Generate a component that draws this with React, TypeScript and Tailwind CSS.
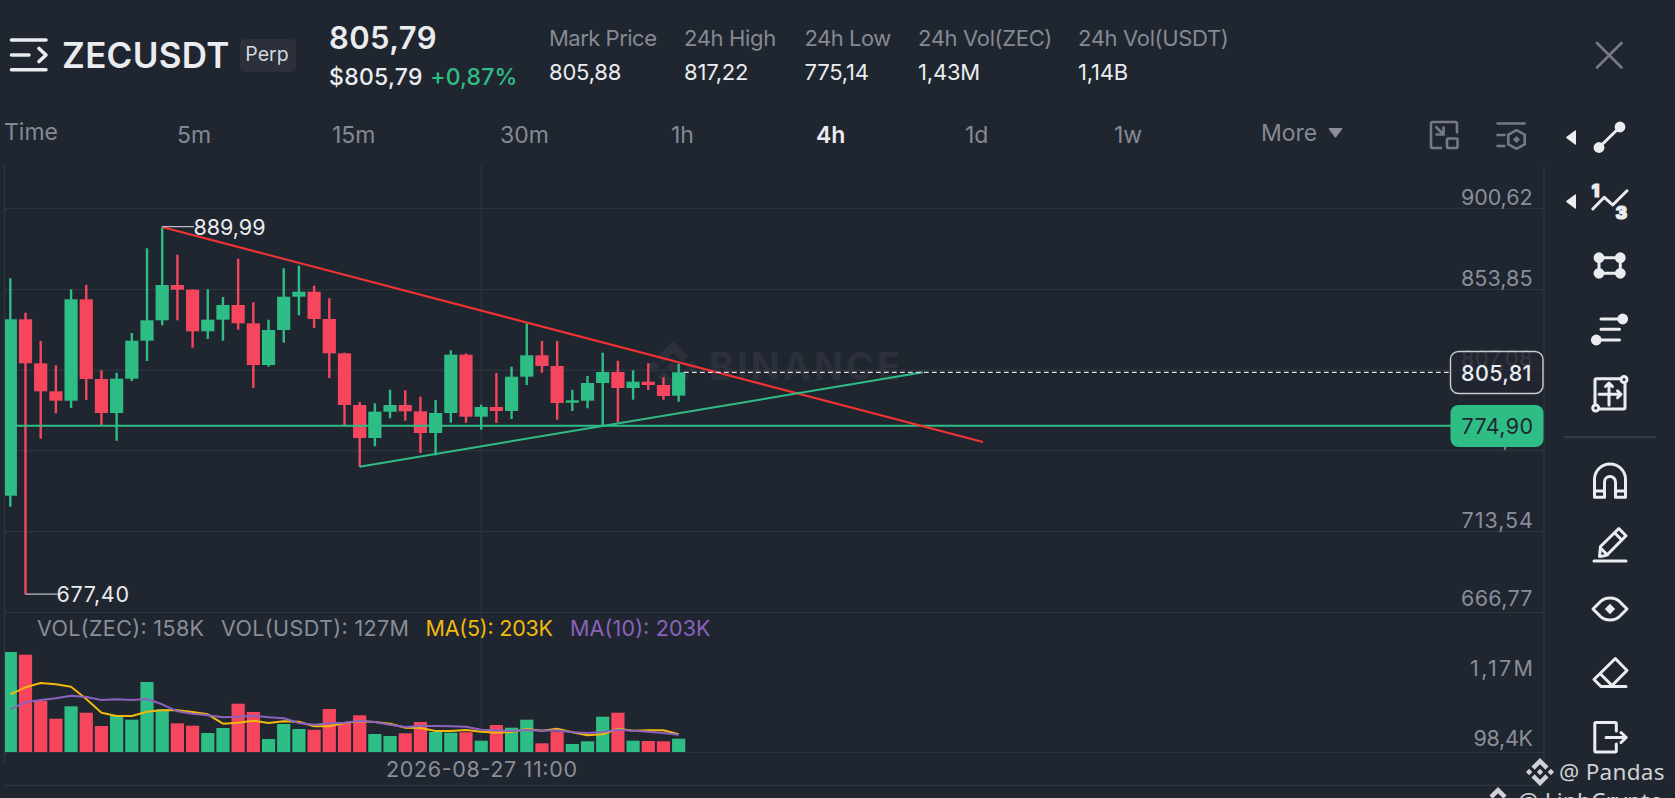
import type { ReactNode } from 'react'

const GREEN = '#2ebd85'
const RED = '#f6465d'
const GRID = '#2f343f'
const MUTED = '#8a8e99'
const LIGHT = '#eaecef'

const stats = [
  { label: 'Mark Price', value: '805,88', width: 'w-[135px]', tracking: 'tracking-[-0.5px]' },
  { label: '24h High', value: '817,22', width: 'w-[120.5px]', tracking: 'tracking-[-0.35px]' },
  { label: '24h Low', value: '775,14', width: 'w-[113.5px]', tracking: 'tracking-[-0.5px]' },
  { label: '24h Vol(ZEC)', value: '1,43M', width: 'w-[160px]', tracking: 'tracking-[-0.35px]' },
  { label: '24h Vol(USDT)', value: '1,14B', width: 'w-[160px]', tracking: 'tracking-[-0.35px]' },
]

const intervals = [
  { label: 'Time', width: 'w-[173px]', raised: true },
  { label: '5m', width: 'w-[155px]' },
  { label: '15m', width: 'w-[168px]' },
  { label: '30m', width: 'w-[171px]' },
  { label: '1h', width: 'w-[145px]' },
  { label: '4h', width: 'w-[149px]', active: true },
  { label: '1d', width: 'w-[149px]' },
  { label: '1w', width: 'w-[147px]' },
]

type Candle = [up: 0 | 1, high: number, top: number, bottom: number, low: number, vol: number]

// y positions of each candle, last column is the top of its volume bar
const candles: Candle[] = [
  [1, 278.3, 319.3, 495.7, 506.7, 652],
  [0, 312.7, 319.3, 363.3, 594.3, 654.7],
  [0, 341, 363.3, 391.3, 438.7, 700.7],
  [0, 365.3, 391.3, 400.7, 413.3, 718.7],
  [1, 289.3, 299.3, 400.7, 408, 706.3],
  [0, 285, 299.3, 379, 400, 712.7],
  [0, 370.3, 379, 413, 425.3, 726],
  [1, 372.7, 378.7, 413, 440.7, 716],
  [1, 333, 340.7, 378.7, 381, 719.7],
  [1, 248.3, 320.3, 340.7, 361, 682],
  [1, 227.3, 285, 320.3, 325.3, 709.3],
  [0, 254.7, 285, 289.7, 320.3, 723.3],
  [0, 289.3, 289.7, 331.3, 347.7, 725.7],
  [1, 289.3, 319.7, 331.3, 339, 733],
  [1, 297, 305, 319.7, 340.7, 728],
  [0, 258.7, 305, 323.3, 329.7, 703.7],
  [0, 302.3, 323.3, 365, 388, 712],
  [1, 319.7, 330, 365, 366.7, 739],
  [1, 268.3, 296.7, 330, 342.7, 724],
  [1, 265.7, 291.7, 296.7, 315.3, 729],
  [0, 285.7, 291.7, 319, 328, 729.7],
  [0, 298.3, 319, 353.3, 378, 709],
  [0, 352.7, 353.3, 405, 425, 723],
  [0, 402, 405, 438, 466.7, 715.3],
  [1, 403.3, 411.7, 438, 446.3, 734],
  [1, 389.7, 405, 411.7, 418.3, 736],
  [0, 390.3, 405, 411.3, 420.7, 733.3],
  [0, 396.7, 411.3, 433, 453, 722],
  [1, 400, 413, 433, 455.3, 732],
  [1, 350.3, 354.7, 413, 422.7, 732.7],
  [0, 353.3, 354.7, 416.7, 422.7, 732.3],
  [1, 404.7, 407, 416.7, 429.7, 740.7],
  [0, 373, 407, 411, 423, 725],
  [1, 366.7, 376.7, 411, 419, 727.7],
  [1, 323.3, 355.3, 376.7, 385, 719.7],
  [0, 341, 355.3, 366, 372.7, 743.3],
  [0, 341, 366, 403, 419.7, 731.7],
  [1, 389.7, 400.3, 402.7, 411, 744],
  [1, 376, 383, 400.7, 408.3, 741.3],
  [1, 352.7, 372, 383, 425.7, 716.7],
  [0, 360.7, 372, 388, 422, 712.7],
  [1, 370.3, 381.7, 388, 399.7, 740.7],
  [0, 363.3, 381.7, 385, 390, 741],
  [0, 377.3, 385, 396, 399.7, 741.3],
  [1, 363.7, 372.3, 395.7, 401.7, 738.7],
]

const ma5 = [
  694.3, 687.3, 683, 684.3, 686.7, 699, 712.7, 716, 716, 711.7, 710.3, 710.3, 712, 714.3, 723.7,
  722.7, 720.7, 723, 721.3, 721.7, 726.3, 726.3, 723, 721.3, 722, 723.7, 727.7, 728, 731, 731, 730,
  731.7, 732.7, 732, 729, 730.7, 728.7, 732.3, 735.3, 734.3, 728.7, 730.7, 730.3, 730.3, 734.3,
]

const ma10 = [
  709.3, 702.3, 700, 698.3, 695.7, 697, 700, 699.3, 700, 699, 704.3, 711.3, 713.7, 715.3, 717.3,
  716.7, 715.7, 717.3, 718.3, 723, 724.7, 723.3, 722.7, 721, 722, 724.7, 727, 726, 726, 726.3,
  726.7, 729.7, 730.3, 731, 730, 730.7, 730.3, 732.3, 733, 732, 729.7, 730.7, 731.7, 733, 734.7,
]

const axis = [
  { text: '900,62', y: 204.5, x: 1461, w: 71.5 },
  { text: '853,85', y: 285.5, x: 1461, w: 71.5 },
  { text: '760,31', y: 446, x: 1461, w: 71.5 },
  { text: '713,54', y: 527.5, x: 1461.5, w: 71.5 },
  { text: '666,77', y: 605.7, x: 1461, w: 71.5 },
  { text: '1,17M', y: 675.5, x: 1470, w: 63 },
  { text: '98,4K', y: 746.3, x: 1473.5, w: 59.5 },
]

const cx = (i: number) => 10.3 + i * 15.19

const linePoints = (values: number[]) => values.map((y, i) => `${cx(i)},${y}`).join(' ')

function BinanceMark({ className }: { className?: string }) {
  return (
    <svg viewBox="0 0 24 24" fill="currentColor" className={className}>
      <path d="M12 0 4.7 7.3l2.7 2.7L12 5.4l4.6 4.6 2.7-2.7zM2.7 9.3 0 12l2.7 2.7L5.4 12zM12 9.3 9.3 12l2.7 2.7 2.7-2.7zM21.3 9.3 18.6 12l2.7 2.7L24 12zM7.4 14l-2.7 2.7L12 24l7.3-7.3-2.7-2.7-4.6 4.6z" />
    </svg>
  )
}

function Header() {
  return (
    <header className="flex h-[110px] items-center">
      <svg viewBox="0 0 40 36" className="ml-[9px] h-9 w-10 shrink-0" fill="none" stroke={LIGHT} strokeWidth="3.6" strokeLinecap="round">
        <path d="M2.5 3H37M2.5 18H20M2.5 32.7H37" />
        <path d="m30 11.5 7 6.5-7 6.5" strokeLinejoin="round" />
      </svg>
      <h1 className="ml-[13px] w-[178px] text-[35px] font-semibold tracking-[0.3px] whitespace-nowrap">ZECUSDT</h1>
      <span className="flex h-[33px] w-14 items-center justify-center rounded-[5px] bg-[#2b303b] text-[19.5px] text-[#d5d7dc]">
        <span className="-ml-0.5">Perp</span>
      </span>
      <div className="ml-[33px] w-[220px] self-start pt-5 whitespace-nowrap">
        <p className="text-[31px] leading-9 font-semibold tracking-[0.4px]">805,79</p>
        <p className="mt-[6px] text-[23px] leading-[30px] font-medium tracking-[0.3px]">
          $805,79 <span className="ml-px tracking-[0.1px] text-[#2ebd85]">+0,87%</span>
        </p>
      </div>
      <div className="flex self-start pt-[22px] text-[22px] leading-8 whitespace-nowrap">
        {stats.map((s) => (
          <div key={s.label} className={s.width}>
            <p className={`text-[#858994] ${s.tracking}`}>{s.label}</p>
            <p className="mt-[1.5px] tracking-[-0.2px]">{s.value}</p>
          </div>
        ))}
      </div>
    </header>
  )
}

function Intervals() {
  return (
    <nav className="flex h-[50px] items-center pl-1 text-[23px] text-[#858994]">
      {intervals.map((item) => (
        <button
          key={item.label}
          className={`text-left ${item.width} ${item.raised ? 'pb-[5px]' : ''} ${item.active ? 'font-semibold text-[#eaecef]' : ''}`}
        >
          {item.label}
        </button>
      ))}
      <button className="flex w-[168px] items-center gap-[11px] pb-[4px]">
        More
        <svg viewBox="0 0 15 10" className="h-2.5 w-[15px]" fill={MUTED}>
          <path d="M1.5 0h12q1.5 0 .6 1.2L8.3 9q-.8 1-1.6 0L.9 1.2Q0 0 1.5 0z" />
        </svg>
      </button>
      <svg viewBox="0 0 30 30" className="h-[30px] w-[30px]" fill="none" stroke="#767a85" strokeWidth="2.6">
        <path d="M28 13.5v-10Q28 2 26.5 2h-23Q2 2 2 3.5v23Q2 28 3.5 28H13" />
        <path d="m6.5 6.5 7.5 7.5M14.5 6.500v8h-8" />
        <rect x="18" y="18.5" width="10.5" height="9.5" rx="1" />
      </svg>
      <svg viewBox="0 0 30 30" className="ml-[37px] h-[30px] w-[30px]" fill="none" stroke="#767a85" strokeWidth="2.6">
        <path d="M.5 3.500h29M.5 15h9M.5 26h9" />
        <path d="m20.500 10.200 8.200 4.500v9.600l-8.200 4.500-8.200-4.500v-9.600z" />
        <path d="m20.500 16 3.500 3.500-3.500 3.500-3.500-3.500z" fill="#767a85" stroke="none" />
      </svg>
    </nav>
  )
}

function Chart() {
  return (
    <div className="h-[638px]">
      <svg viewBox="0 160 1548 638" width="1548" height="638" className="block font-['Inter',sans-serif] text-[21.5px]">
        <g fill="#2b303b">
          <path d="m673 341-15.500 15.500 6 6 9.500-9.500 9.500 9.500 6-6zM673 360.500l-6 6 6 6 6-6zM653.500 360.500l-6 6 6 6 6-6zM692.500 360.500l-6 6 6 6 6-6zM663.500 370.500l-6 6L673 392l15.500-15.500-6-6L673 380z" />
          <text x="709" y="380" fontSize="38" fontWeight="700" textLength="191">
            BINANCE
          </text>
        </g>

        <g stroke={GRID} strokeWidth="1.2">
          {[208.5, 289.5, 370.2, 450.7, 531.7, 612.5, 752.5, 785.3].map((y) => (
            <path key={y} d={`M5 ${y}H1544`} />
          ))}
          <path d="M4.5 165V765M481.3 165V752M1544 165V765" />
        </g>

        {candles.map(([up, high, top, bottom, low, vol], i) => {
          const color = up ? GREEN : RED
          // first bar is cut off by the left edge of the plot
          const left = i === 0 ? 5 : cx(i) - 6.6
          const width = cx(i) + 6.6 - left
          return (
            <g key={i} fill={color}>
              <rect x={cx(i) - 1.2} y={high} width="2.4" height={low - high} />
              <rect x={left} y={top} width={width} height={bottom - top} />
              <rect x={left} y={vol} width={width} height={752 - vol} />
            </g>
          )
        })}

        <g fill="none" strokeWidth="2" strokeLinejoin="round">
          <polyline points={linePoints(ma5)} stroke="#f0b90b" />
          <polyline points={linePoints(ma10)} stroke="#8b62bd" />
          <path d="M5 425.7H1451" stroke={GREEN} />
          <path d="M162 227 983 442" stroke="#f33232" />
          <path d="M359.5 466.7 923 372.3" stroke={GREEN} />
          <path d="M684 372.3H1450" stroke="#dfe1e5" strokeWidth="1.3" strokeDasharray="4.7 3.3" />
          <path d="M162 226.7h32M25.5 594.2h32" stroke="#b9bcc4" strokeWidth="1.3" />
        </g>

        <g fill={LIGHT}>
          <text x="193.5" y="235.300" textLength="72">889,99</text>
          <text x="56.5" y="602.200" textLength="72.500">677,40</text>
        </g>

        <g fill={MUTED}>
          <text x="37" y="635.5" textLength="167">VOL(ZEC): 158K</text>
          <text x="221" y="635.5" textLength="188">VOL(USDT): 127M</text>
          <text x="386" y="777" textLength="191">2026-08-27 11:00</text>
          {axis.map((a) => (
            <text key={a.text} x={a.x} y={a.y} textLength={a.w}>
              {a.text}
            </text>
          ))}
        </g>
        <text x="425.5" y="635.5" textLength="127.5" fill="#f0b90b">MA(5): 203K</text>
        <text x="570" y="635.5" textLength="140.5" fill="#8b62bd">MA(10): 203K</text>

        <text x="1461" y="365.5" textLength="71.5" fill="#414651">807,08</text>
        <rect x="1450.5" y="351.5" width="92.5" height="42" rx="8" fill="#202630" fillOpacity=".4" stroke="#c9ccd2" strokeWidth="1.4" />
        <text x="1461" y="381.2" textLength="70.5" fill={LIGHT} fontWeight="500">805,81</text>
        <rect x="1450.5" y="405" width="93" height="42" rx="8" fill={GREEN} />
        <text x="1461.5" y="434.2" textLength="71.5" fill="#202630">774,90</text>
      </svg>
    </div>
  )
}

function Tool({ children, arrow }: { children: ReactNode; arrow?: boolean }) {
  return (
    <button className="flex h-16 shrink-0 items-center gap-3.5 pl-[18px]">
      <svg viewBox="0 0 10 15" className="h-[15px] w-2.5" fill={LIGHT}>
        {arrow && <path d="M10 1v13q0 1.2-1 .4L.6 8.3q-.8-.8 0-1.6L9 .6q1-.8 1 .4z" />}
      </svg>
      <svg viewBox="0 0 40 40" className="h-10 w-10 overflow-visible" fill="none" stroke={LIGHT} strokeWidth="3" strokeLinecap="round" strokeLinejoin="round">
        {children}
      </svg>
    </button>
  )
}

function Dot({ x, y }: { x: number; y: number }) {
  return <circle cx={x} cy={y} r="5.4" fill={LIGHT} stroke="none" />
}

function Toolbar() {
  return (
    <aside className="flex w-[127px] flex-col">
      <button className="flex h-[105px] items-center pt-1 pl-[47px]">
        <svg viewBox="0 0 28 28" className="h-7 w-7" fill="none" stroke="#767a85" strokeWidth="2.6" strokeLinecap="round">
          <path d="m2 2 24.5 24.5M26.5 2 2 26.5" />
        </svg>
      </button>
      <Tool arrow>
        <path d="M9 30.5 30 10" />
        <Dot x={30} y={10} />
        <Dot x={9} y={30.5} />
      </Tool>
      <Tool arrow>
        <path d="M2.8 28 14.3 16.3 22.7 24 37 9.8" />
        <g fill={LIGHT} strokeWidth="1.2" className="font-['Inter',sans-serif] text-[17.5px] font-black">
          <text x="1.5" y="16.3">1</text>
          <text x="25.5" y="37.7">3</text>
        </g>
      </Tool>
      <Tool>
        <path d="M9 12.7h21.3v15.6H9z" />
        <Dot x={9} y={12.7} />
        <Dot x={30.3} y={12.7} />
        <Dot x={9} y={28.3} />
        <Dot x={30.3} y={28.3} />
      </Tool>
      <Tool>
        <path d="M11 10h20M11 20.3h18.5M8 31h21.5" />
        <Dot x={32.7} y={10} />
        <Dot x={6.3} y={31} />
      </Tool>
      <Tool>
        <path d="M30 5.7H6.5Q5 5.7 5 7.2V31M10 36h23.5q1.5 0 1.5-1.5V11" />
        <circle cx="34" cy="6.5" r="3" />
        <circle cx="5.7" cy="35" r="3" />
        <path d="M19 32V10.5M15.5 13.5 19 10l3.5 3.5M9 21.3h21.500M27.500 17.800l3.500 3.500-3.500 3.500" />
      </Tool>
      <div className="mt-[11px] mb-[11px] ml-4 h-0.5 w-[92px] shrink-0 bg-[#343944]" />
      <Tool>
        <path d="M4.5 36.3V18.5a15.5 15.500 0 0 1 31 0v17.800h-10V21a5.500 5.500 0 0 0-11 0v15.300z" />
        <path d="M4.5 30h10M25.5 30h10" />
      </Tool>
      <Tool>
        <path d="M4 36h32" />
        <path d="m9.5 31.5 1-10L28.8 3.500l7.200 7.200-18 18.300q-2 2-8.500 2.500zM24.800 8l7 7M11 23.500l6.500 6.500" />
      </Tool>
      <Tool>
        <path d="M3 20q5-5 7.500-7.500Q14 9 20 9t9.500 3.500L37 20l-7.500 7.500Q26 31 20 31t-9.500-3.500z" />
        <path d="m20 14.8 5.2 5.2-5.2 5.2-5.2-5.2z" fill={LIGHT} stroke="none" />
      </Tool>
      <Tool>
        <path d="M25.3 5.5 37 17.5l-16 16H11l-7-7zM10.500 21 22 32.500M11 33.500h25" />
      </Tool>
      <Tool>
        <path d="M26.3 14V6.700q0-1.200-1.300-1.200H6q-1.200 0-1.200 1.200v27q0 1.200 1.200 1.200h19q1.300 0 1.300-1.200V27M16 20.500h20M31 15.500l5.300 5-5.300 5" />
      </Tool>
    </aside>
  )
}

// author tags laid over the bottom right corner
function AuthorTags() {
  return (
    <div className="absolute right-0 bottom-0 h-[41px] w-[200px] overflow-hidden font-['Noto_Sans',sans-serif] text-[22.5px] leading-[29px] tracking-[0.3px] whitespace-nowrap text-[#d0d2d5]">
      <div className="flex items-center gap-[5px] pl-[51px]">
        <BinanceMark className="h-7 w-7" />
        <span>@ Pandas</span>
      </div>
      <div className="flex items-center gap-[6px] pl-[9px]">
        <BinanceMark className="h-7 w-7" />
        <span>@ LinhCrypto</span>
      </div>
    </div>
  )
}

export default function App() {
  return (
    <main className="relative flex h-[798px] w-[1675px] overflow-hidden bg-[#202630] font-['Inter',sans-serif] text-[#eaecef]">
      <section className="w-[1548px] shrink-0">
        <Header />
        <Intervals />
        <Chart />
      </section>
      <Toolbar />
      <AuthorTags />
    </main>
  )
}
